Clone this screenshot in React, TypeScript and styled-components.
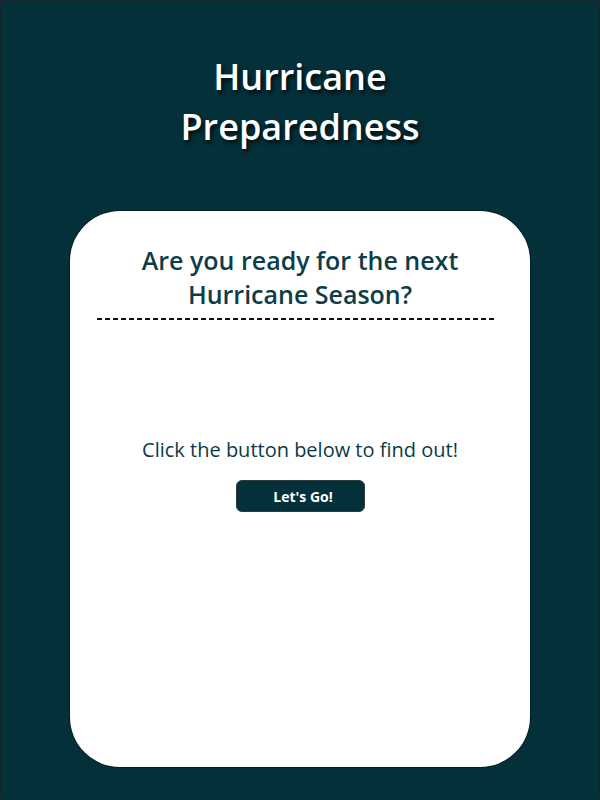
import React from "react";
import styled, { createGlobalStyle } from "styled-components";

const Global = createGlobalStyle`
  html, body { margin: 0; padding: 0; }
  body { font-family: "Open Sans", "Liberation Sans", sans-serif; background: #04303a; }
  * { box-sizing: border-box; }
`;

const Page = styled.div`
  width: 600px;
  height: 800px;
  background: #04303a;
  border: 1px solid #14252a;
  display: flex;
  flex-direction: column;
  align-items: center;
  padding-top: 51px;
`;

const Title = styled.h1`
  margin: 0;
  width: 300px;
  text-align: center;
  color: #ffffff;
  font-size: 36px;
  font-weight: 600;
  line-height: 50px;
  text-shadow: 2px 3px 4px rgba(0, 0, 0, 0.75);
`;

const Card = styled.main`
  margin-top: 59px;
  width: 460px;
  height: 556px;
  background: #ffffff;
  border-radius: 50px;
  box-shadow: 0 0 1px 1px rgba(0, 0, 0, 0.35);
  display: flex;
  flex-direction: column;
  align-items: center;
  padding: 32px 27px 0;
`;

const Question = styled.h2`
  margin: 0;
  width: 360px;
  text-align: center;
  color: #0d3d48;
  font-size: 25px;
  font-weight: 600;
  line-height: 34px;
`;

const Divider = styled.div`
  align-self: flex-start;
  margin-top: 7px;
  width: 397px;
  height: 2px;
  background: repeating-linear-gradient(
    to right,
    #111 0 5px,
    transparent 5px 8px
  );
`;

const Prompt = styled.p`
  margin: 116px 0 0;
  color: #0b3b46;
  font-size: 20px;
  font-weight: 400;
  line-height: 27px;
`;

const GoButton = styled.button`
  margin-top: 17px;
  width: 129px;
  height: 32px;
  padding: 0 0 0 6px;
  border-radius: 6px;
  border: 1px solid #2a3a3e;
  background: #04303a;
  color: #ffffff;
  font-family: "Open Sans", "Liberation Sans", sans-serif;
  font-size: 14px;
  font-weight: 700;
  cursor: pointer;
`;

export default function App() {
  return (
    <>
      <Global />
      <Page>
        <Title>Hurricane Preparedness</Title>
        <Card>
          <Question>Are you ready for the next Hurricane Season?</Question>
          <Divider />
          <Prompt>Click the button below to find out!</Prompt>
          <GoButton>Let's Go!</GoButton>
        </Card>
      </Page>
    </>
  );
}
